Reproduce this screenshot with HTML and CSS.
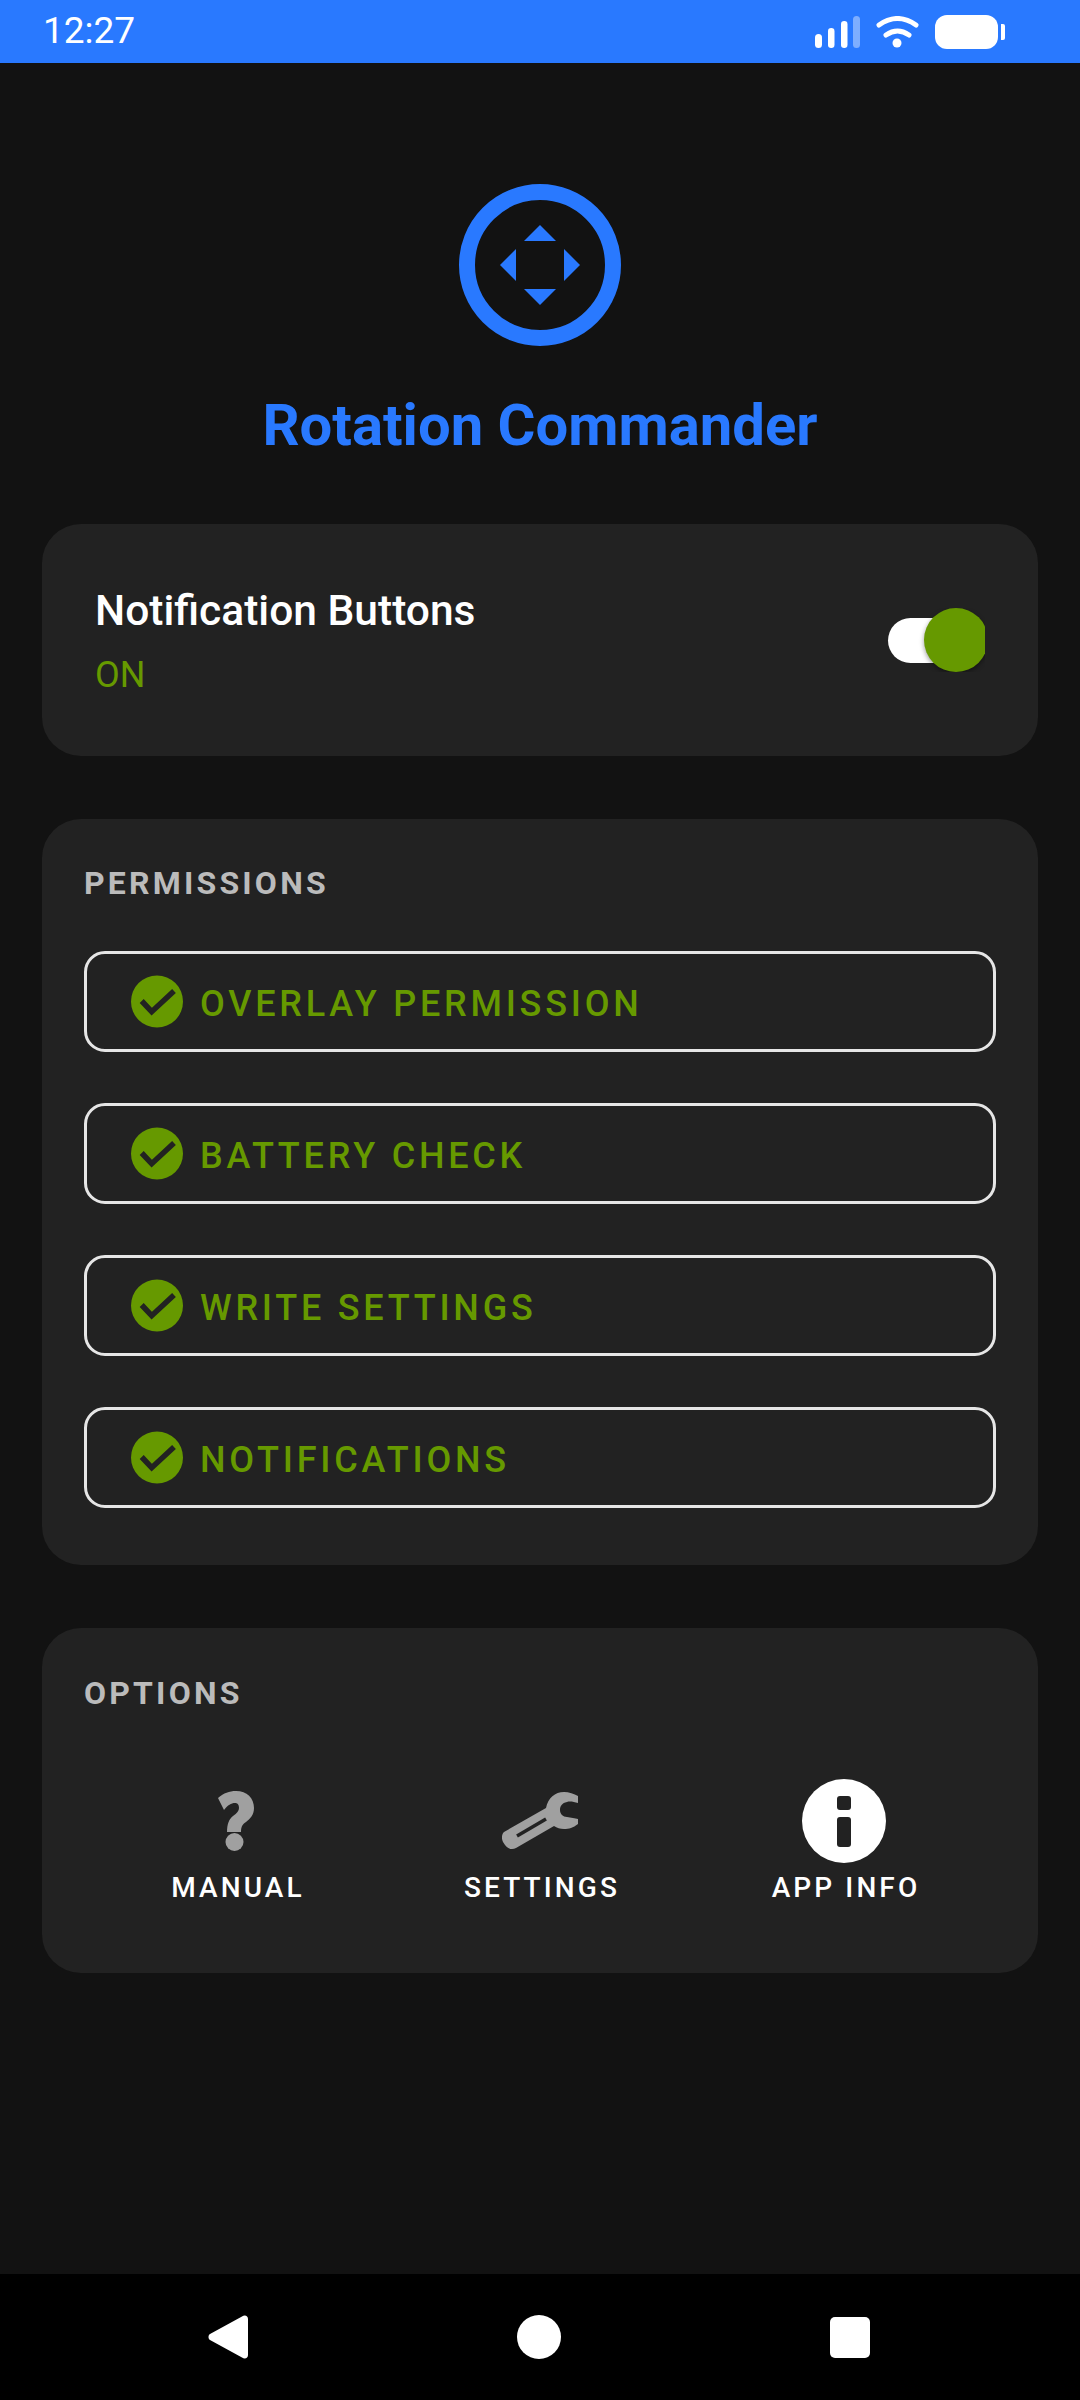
FILE: index.html
```html
<!DOCTYPE html>
<html lang="en">
<head>
  <meta charset="UTF-8" />
  <meta name="viewport" content="width=device-width, initial-scale=1.0" />
  <title>Rotation Commander</title>
  <link rel="stylesheet" href="styles.css">
</head>
<body>
  <div class="status-bar">
    <span class="clock">12:27</span>
    <div class="status-icons">
      <svg class="signal" width="45" height="32" viewBox="0 0 45 32">
        <rect x="0" y="18" width="7" height="14" rx="3.5" fill="#fff"/>
        <rect x="13" y="12" width="6.5" height="20" rx="3.2" fill="#fff"/>
        <rect x="26" y="5" width="6.5" height="27" rx="3.2" fill="#fff"/>
        <rect x="38" y="0" width="7" height="32" rx="3.5" fill="#fff" fill-opacity="0.4"/>
      </svg>
      <svg class="wifi" width="43" height="32" viewBox="0 0 43 32">
        <path d="M3 9 Q21.5 -4 40 9" fill="none" stroke="#fff" stroke-width="5" stroke-linecap="round"/>
        <path d="M10 19 Q21.5 11 33 19" fill="none" stroke="#fff" stroke-width="5" stroke-linecap="round"/>
        <circle cx="21" cy="27" r="4.5" fill="#fff"/>
      </svg>
      <div class="battery">
        <div class="battery-body"></div>
        <div class="battery-tip"></div>
      </div>
    </div>
  </div>

  <main class="content">
    <header class="brand">
      <svg class="logo" width="162" height="162" viewBox="0 0 162 162">
        <circle cx="81" cy="81" r="73" fill="none" stroke="#2979ff" stroke-width="16"/>
        <polygon points="81,41 97,57 65,57" fill="#2979ff"/>
        <polygon points="81,121 97,105 65,105" fill="#2979ff"/>
        <polygon points="41,81 57,65 57,97" fill="#2979ff"/>
        <polygon points="121,81 105,65 105,97" fill="#2979ff"/>
      </svg>
      <h1 class="app-title">Rotation Commander</h1>
    </header>

    <section class="card toggle-card">
      <div class="toggle-text">
        <div class="toggle-title">Notification Buttons</div>
        <div class="toggle-state">ON</div>
      </div>
      <div class="switch">
        <div class="switch-track"></div>
        <div class="switch-thumb"></div>
      </div>
    </section>

    <section class="card perm-card">
      <h2 class="card-label">PERMISSIONS</h2>
      <div class="perm-list">
        <div class="perm-btn">
          <svg class="check" width="52" height="53" viewBox="0 0 52 53"><circle cx="26" cy="26.5" r="26" fill="#669900"/><path d="M10.7 26 L20.7 36.7 L43 16" fill="none" stroke="#222" stroke-width="5.5"/></svg>
          <span>OVERLAY PERMISSION</span>
        </div>
        <div class="perm-btn">
          <svg class="check" width="52" height="53" viewBox="0 0 52 53"><circle cx="26" cy="26.5" r="26" fill="#669900"/><path d="M10.7 26 L20.7 36.7 L43 16" fill="none" stroke="#222" stroke-width="5.5"/></svg>
          <span>BATTERY CHECK</span>
        </div>
        <div class="perm-btn">
          <svg class="check" width="52" height="53" viewBox="0 0 52 53"><circle cx="26" cy="26.5" r="26" fill="#669900"/><path d="M10.7 26 L20.7 36.7 L43 16" fill="none" stroke="#222" stroke-width="5.5"/></svg>
          <span>WRITE SETTINGS</span>
        </div>
        <div class="perm-btn">
          <svg class="check" width="52" height="53" viewBox="0 0 52 53"><circle cx="26" cy="26.5" r="26" fill="#669900"/><path d="M10.7 26 L20.7 36.7 L43 16" fill="none" stroke="#222" stroke-width="5.5"/></svg>
          <span>NOTIFICATIONS</span>
        </div>
      </div>
    </section>

    <section class="card options-card">
      <h2 class="card-label">OPTIONS</h2>
      <div class="options-row">
        <div class="option">
          <div class="option-icon">
            <svg class="soft" width="36" height="60" viewBox="0 0 36 60">
              <path d="M0 7 C6 2 11 0 18 0 C29 0 36 7 36 17 C36 24 32 28 28 31 C25 33 23 35 23 41 H9 C9 33 11 28 15 25 C19 22 21 20 21 17 C21 13 19 12 17 12 C13 12 10 14 6 19 Z" fill="#a0a0a0"/>
              <circle cx="16.5" cy="51" r="9" fill="#a0a0a0"/>
            </svg>
          </div>
          <span class="option-name">MANUAL</span>
        </div>
        <div class="option">
          <div class="option-icon">
            <svg class="soft" width="76" height="58" viewBox="0 0 76 58">
              <path d="M2 40 L44 16 C46 6 53 0 62 0 C67 0 72 2 76 4 V11 C72 10 68 9 65 10 C60 11 58 14 58 18 C58 22 61 25 65 25 C69 26 73 26 76 27 V32 C71 36 67 37 62 37 C58 37 55 36 52 34 L14 56 C10 58 6 57 3 53 L1 50 C-1 46 0 42 2 40 Z" fill="#a0a0a0"/>
              <path d="M15 44 L44 27" stroke="#222" stroke-width="3.5"/>
            </svg>
          </div>
          <span class="option-name">SETTINGS</span>
        </div>
        <div class="option">
          <div class="option-icon">
            <svg class="soft" width="84" height="84" viewBox="0 0 84 84">
              <circle cx="42" cy="42" r="42" fill="#fff"/>
              <rect x="35" y="17" width="14" height="14" rx="3" fill="#222"/>
              <rect x="35" y="38" width="14" height="30" rx="3" fill="#222"/>
            </svg>
          </div>
          <span class="option-name">APP INFO</span>
        </div>
      </div>
    </section>
  </main>

  <nav class="nav-bar">
    <svg width="40" height="44" viewBox="0 0 40 44"><path d="M34 1.5 C37 -0.5 40 1 40 4 V40 C40 43 37 44.500 34 42.500 L2 25 C0 24 0 20 2 19 Z" fill="#fff"/></svg>
    <svg width="44" height="44" viewBox="0 0 44 44"><circle cx="22" cy="22" r="22" fill="#fff"/></svg>
    <svg width="40" height="41" viewBox="0 0 40 41"><rect width="40" height="41" rx="5" fill="#fff"/></svg>
  </nav>
</body>
</html>
```

FILE: styles.css
```css
* { box-sizing: border-box; }
body { margin: 0; width: 1080px; height: 2400px; background: #121212; font-family: Roboto, sans-serif; color: #fff; display: flex; flex-direction: column; overflow: hidden; }

.status-bar { height: 63px; background: #2979ff; display: flex; align-items: center; justify-content: space-between; padding: 0 75px 0 43px; }
.clock { font-size: 37px; color: #fff; margin-top: -2px; }
.status-icons { display: flex; align-items: center; gap: 16px; }
.battery { display: flex; align-items: center; gap: 3px; }
.battery-body { width: 63px; height: 34px; background: #fff; border-radius: 12px; }
.battery-tip { width: 4px; height: 16px; background: #fff; border-radius: 0 2px 2px 0; }

.content { flex: 1; padding: 0 42px; }
.brand { display: flex; flex-direction: column; align-items: center; padding-top: 121px; }
.app-title { margin: 47px 0 0; font-size: 58px; line-height: 64px; font-weight: 700; color: #2979ff; }

.card { background: #222; border-radius: 39px; }
.toggle-card { height: 232px; margin-top: 67px; padding: 0 53px; display: flex; align-items: center; justify-content: space-between; }
.toggle-title { font-size: 42.5px; line-height: 48px; font-weight: 500; margin-top: 1px; }
.toggle-state { font-size: 36px; line-height: 40px; margin-top: 20px; color: #669900; }

.switch { width: 98px; height: 64px; overflow: hidden; position: relative; flex: none; }
.switch-track { position: absolute; left: 1px; top: 10px; width: 80px; height: 45px; border-radius: 23px; background: #fff; }
.switch-thumb { position: absolute; left: 37px; top: 0; width: 64px; height: 64px; border-radius: 50%; background: #669900; box-shadow: 0 2px 5px rgba(0,0,0,0.4); }

.perm-card { height: 746px; margin-top: 63px; padding: 46px 42px 0; }
.card-label { margin: 0; font-size: 32px; line-height: 36px; font-weight: 700; letter-spacing: 3.2px; color: #bbb; }
.perm-list { margin-top: 50px; display: flex; flex-direction: column; gap: 51px; }
.perm-btn { height: 101px; border: 3px solid #e6e6e6; border-radius: 21px; padding-left: 44px; display: flex; align-items: center; gap: 17px; font-size: 36px; font-weight: 500; letter-spacing: 3.75px; color: #669900; }
.perm-btn span { margin-top: 5px; }
.check { flex: none; }

.options-card { height: 345px; margin-top: 63px; padding: 47px 42px 0; }
.options-row { display: grid; grid-template-columns: repeat(3, 304px); padding-left: 2px; }
.option { display: flex; flex-direction: column; align-items: center; }
.option-icon { height: 84px; display: flex; align-items: center; justify-content: center; margin: 68px 4px 0 0; }
.soft { filter: blur(0.5px); }
.option-name { margin-top: 8px; font-size: 28px; line-height: 34px; font-weight: 500; letter-spacing: 3.1px; color: #fff; }

.nav-bar { height: 126px; background: #000; display: flex; align-items: center; justify-content: space-between; padding: 0 210px 0 208px; }
```
